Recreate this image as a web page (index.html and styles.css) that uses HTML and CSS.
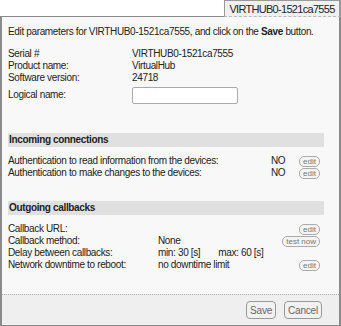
FILE: index.html
```html
<!DOCTYPE html>
<html lang="en">
<head>
    <meta charset="UTF-8">
    <title>VIRTHUB0-1521ca7555</title>
    <link rel="stylesheet" href="styles.css">
</head>
<body>
    <div class="window">
        <div class="tabbar">
            <div class="tab">VIRTHUB0-1521ca7555</div>
        </div>
        <div class="panel">
            <div class="content">
                <p class="intro">Edit parameters for VIRTHUB0-1521ca7555, and click on the <b>Save</b> button.</p>

                <table class="params">
                    <tr><td class="lbl">Serial #</td><td>VIRTHUB0-1521ca7555</td></tr>
                    <tr><td class="lbl">Product name:</td><td>VirtualHub</td></tr>
                    <tr><td class="lbl">Software version:</td><td>24718</td></tr>
                    <tr class="name-row"><td class="lbl">Logical name:</td><td><input type="text" class="name-input"></td></tr>
                </table>

                <div class="section-title">Incoming connections</div>
                <table class="rows">
                    <tr>
                        <td class="wide">Authentication to read information from the devices:</td>
                        <td class="val">NO</td>
                        <td class="act"><span class="mini">edit</span></td>
                    </tr>
                    <tr>
                        <td class="wide">Authentication to make changes to the devices:</td>
                        <td class="val">NO</td>
                        <td class="act"><span class="mini">edit</span></td>
                    </tr>
                </table>

                <div class="section-title">Outgoing callbacks</div>
                <table class="rows cb">
                    <tr>
                        <td class="lbl">Callback URL:</td>
                        <td></td>
                        <td class="act"><span class="mini">edit</span></td>
                    </tr>
                    <tr>
                        <td class="lbl">Callback method:</td>
                        <td>None</td>
                        <td class="act"><span class="mini">test now</span></td>
                    </tr>
                    <tr>
                        <td class="lbl">Delay between callbacks:</td>
                        <td>min: 30 [s]<span class="gap"></span>max: 60 [s]</td>
                        <td class="act"></td>
                    </tr>
                    <tr>
                        <td class="lbl">Network downtime to reboot:</td>
                        <td>no downtime limit</td>
                        <td class="act"><span class="mini">edit</span></td>
                    </tr>
                </table>
            </div>
            <div class="footer">
                <button class="btn">Save</button>
                <button class="btn">Cancel</button>
            </div>
        </div>
    </div>
</body>
</html>
```

FILE: styles.css
```css
* {
    margin: 0;
    padding: 0;
    box-sizing: border-box;
}

body {
    font-family: 'Liberation Sans', Arial, sans-serif;
    font-size: 10px;
    letter-spacing: -0.35px;
    color: #222;
    background-color: #fff;
    width: 341px;
    height: 326px;
    overflow: hidden;
}

.window {
    width: 341px;
}

.tabbar {
    display: flex;
    justify-content: flex-end;
    height: 16px;
}

.tab {
    width: 117px;
    height: 17px;
    background-color: #f0f0f0;
    border: 1px solid #999;
    border-bottom: 1px dashed #bbb;
    border-right-width: 2px;
    font-size: 11px;
    letter-spacing: -0.7px;
    text-align: center;
    line-height: 16px;
    position: relative;
    z-index: 1;
}

.panel {
    height: 310px;
    background-color: #f8f8f8;
    border: 1px solid #8a8a8a;
    border-left-width: 2px;
    border-right-width: 2px;
    display: flex;
    flex-direction: column;
}

.content {
    flex: 1;
    padding: 8px 15px 0 6px;
}

.intro {
    line-height: 13px;
    margin-bottom: 10px;
}

.params {
    border-collapse: collapse;
    margin-bottom: 27px;
}

.params td {
    padding: 0;
    height: 12px;
    line-height: 12px;
}

.params .lbl {
    width: 124px;
}

.params .name-row td {
    height: 22px;
}

.name-input {
    width: 106px;
    height: 17px;
    border: 1px solid #aaa;
    border-radius: 2px;
    background: #fff;
}

.section-title {
    background-color: #e0e0e0;
    font-weight: bold;
    height: 14px;
    line-height: 14px;
    padding-left: 1px;
    margin-bottom: 8px;
}

.rows {
    width: 100%;
    border-collapse: collapse;
    margin-bottom: 22px;
}

.rows td {
    padding: 0;
    height: 12px;
    line-height: 12px;
    white-space: nowrap;
}

.rows .val {
    width: 18px;
}

.rows .act {
    width: 35px;
    text-align: right;
    padding-right: 4px;
}

.rows.cb .lbl {
    width: 150px;
}

.gap {
    display: inline-block;
    width: 18px;
}

.mini {
    display: inline-block;
    font-size: 8px;
    letter-spacing: 0;
    line-height: 9px;
    color: #777;
    border: 1px solid #aaa;
    border-radius: 5px;
    padding: 0 3px;
    background: #f4f4f4;
}

.footer {
    height: 31px;
    border-top: 1px dotted #aaa;
    background-color: #efefef;
    display: flex;
    justify-content: flex-end;
    align-items: center;
    gap: 8px;
    padding-right: 17px;
}

.btn {
    font-family: inherit;
    font-size: 10px;
    letter-spacing: -0.2px;
    color: #666;
    background: #f2f2f2;
    border: 1px solid #999;
    border-radius: 4px;
    height: 18px;
    padding: 0 3px;
}
```
